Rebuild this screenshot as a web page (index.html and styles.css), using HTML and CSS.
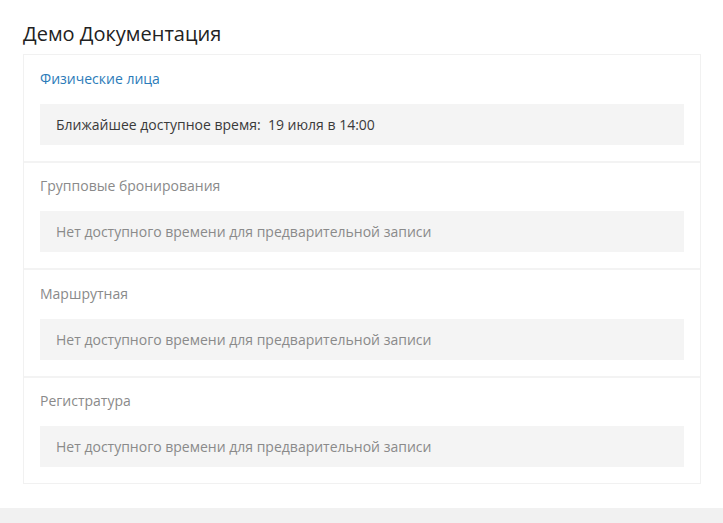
FILE: index.html
```html
<!DOCTYPE html>
<html lang="ru">
<head>
<meta charset="utf-8">
<title>Демо Документация</title>
<link rel="stylesheet" href="styles.css">
</head>
<body>
<main class="page">
  <h1 class="page-title">Демо Документация</h1>
  <div class="card">
    <section class="service">
      <a class="service-name service-name--active" href="#">Физические лица</a>
      <div class="slot slot--available">Ближайшее доступное время:&nbsp; 19 июля в 14:00</div>
    </section>
    <section class="service">
      <div class="service-name">Групповые бронирования</div>
      <div class="slot">Нет доступного времени для предварительной записи</div>
    </section>
    <section class="service">
      <div class="service-name">Маршрутная</div>
      <div class="slot">Нет доступного времени для предварительной записи</div>
    </section>
    <section class="service">
      <div class="service-name">Регистратура</div>
      <div class="slot">Нет доступного времени для предварительной записи</div>
    </section>
  </div>
</main>
<footer class="footer"></footer>
</body>
</html>
```

FILE: styles.css
```css
html, body {
  margin: 0;
  padding: 0;
  background: #fff;
  font-family: "Open Sans", "DejaVu Sans", sans-serif;
  font-size: 14px;
  color: #333;
}

.page {
  padding: 20px 22px 24px 23px;
}

.page-title {
  margin: 0 0 6px;
  font-size: 20px;
  font-weight: 400;
  line-height: 28px;
  color: #222;
}

.card {
  border: 1px solid #f1f1f1;
}

.service {
  padding: 12.5px 16px 16px;
}

.service + .service {
  border-top: 2px solid #f3f3f3;
}

.service-name {
  display: block;
  line-height: 22px;
  margin-bottom: 14px;
  color: #8a8a8a;
  text-decoration: none;
}

.service-name--active {
  color: #2b7bb9;
}

.slot {
  height: 41px;
  line-height: 41px;
  padding: 0 16px;
  background: #f4f4f4;
  color: #8a8a8a;
}

.slot--available {
  color: #3a3a3a;
}

.footer {
  height: 40px;
  background: #f1f1f1;
}
```
